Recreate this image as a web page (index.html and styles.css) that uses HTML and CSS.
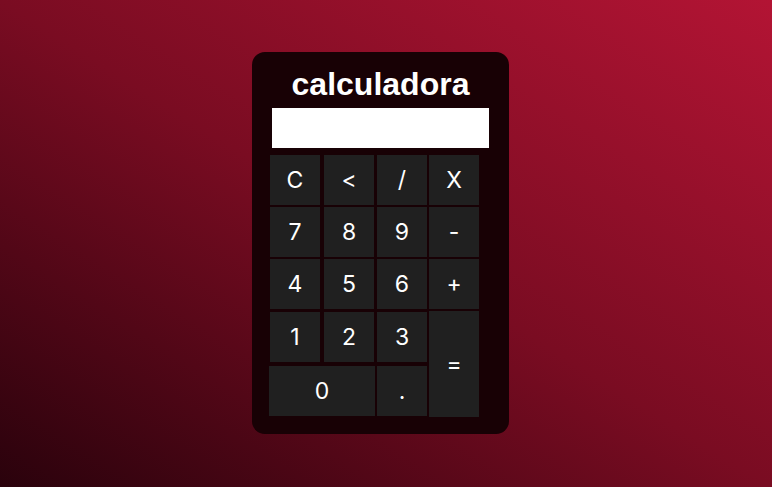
FILE: index.html
```html
<!DOCTYPE html>
<html lang="pt">
<head>
<meta charset="utf-8">
<title>calculadora</title>
<link rel="stylesheet" href="styles.css">
</head>
<body>
  <main class="calc">
    <h1 class="calc-title">calculadora</h1>
    <input class="calc-display" type="text" aria-label="visor">
    <div class="keys">
      <button class="key">C</button>
      <button class="key">&lt;</button>
      <button class="key">/</button>
      <button class="key">X</button>
      <button class="key">7</button>
      <button class="key">8</button>
      <button class="key">9</button>
      <button class="key">-</button>
      <button class="key">4</button>
      <button class="key">5</button>
      <button class="key">6</button>
      <button class="key">+</button>
      <button class="key">1</button>
      <button class="key">2</button>
      <button class="key">3</button>
      <button class="key key-equals">=</button>
      <button class="key key-zero">0</button>
      <button class="key">.</button>
    </div>
  </main>
</body>
</html>
```

FILE: styles.css
```css
* { box-sizing: border-box; }
html, body { height: 100%; }
body {
  margin: 0;
  display: flex;
  align-items: center;
  justify-content: center;
  background: linear-gradient(to top right, #2a020c 0%, #7a0c22 50%, #b31434 100%);
  font-family: "Liberation Sans", Arial, sans-serif;
}
.calc {
  width: 257px;
  height: 382px;
  margin: 0 11px 1px 0;
  background: #180105;
  border-radius: 13px;
  padding: 14px 0 0 18px;
  display: flex;
  flex-direction: column;
}
.calc-title {
  margin: 0;
  width: 221px;
  text-align: center;
  font-size: 32px;
  font-weight: bold;
  color: #ffffff;
  line-height: 37px;
}
.calc-display {
  margin: 5px 0 0 2px;
  width: 217px;
  height: 40px;
  border: none;
  background: #ffffff;
  padding: 0;
}
.keys {
  margin-top: 7px;
  display: grid;
  grid-template-columns: 54px 53px 52px 50px;
  grid-template-rows: 52px 52px 53px 54px 51px;
}
.key {
  width: 50px;
  height: 50px;
  border: none;
  padding: 0;
  background: #202020;
  color: #ffffff;
  font-family: Inter, "Liberation Sans", sans-serif;
  font-size: 23px;
  font-weight: 400;
}
.key-equals {
  grid-column: 4;
  grid-row: 4 / span 2;
  height: 106px;
  margin-top: -1px;
}
.key-zero {
  grid-column: 1 / span 2;
  width: 106px;
  margin-left: -1px;
}
```
